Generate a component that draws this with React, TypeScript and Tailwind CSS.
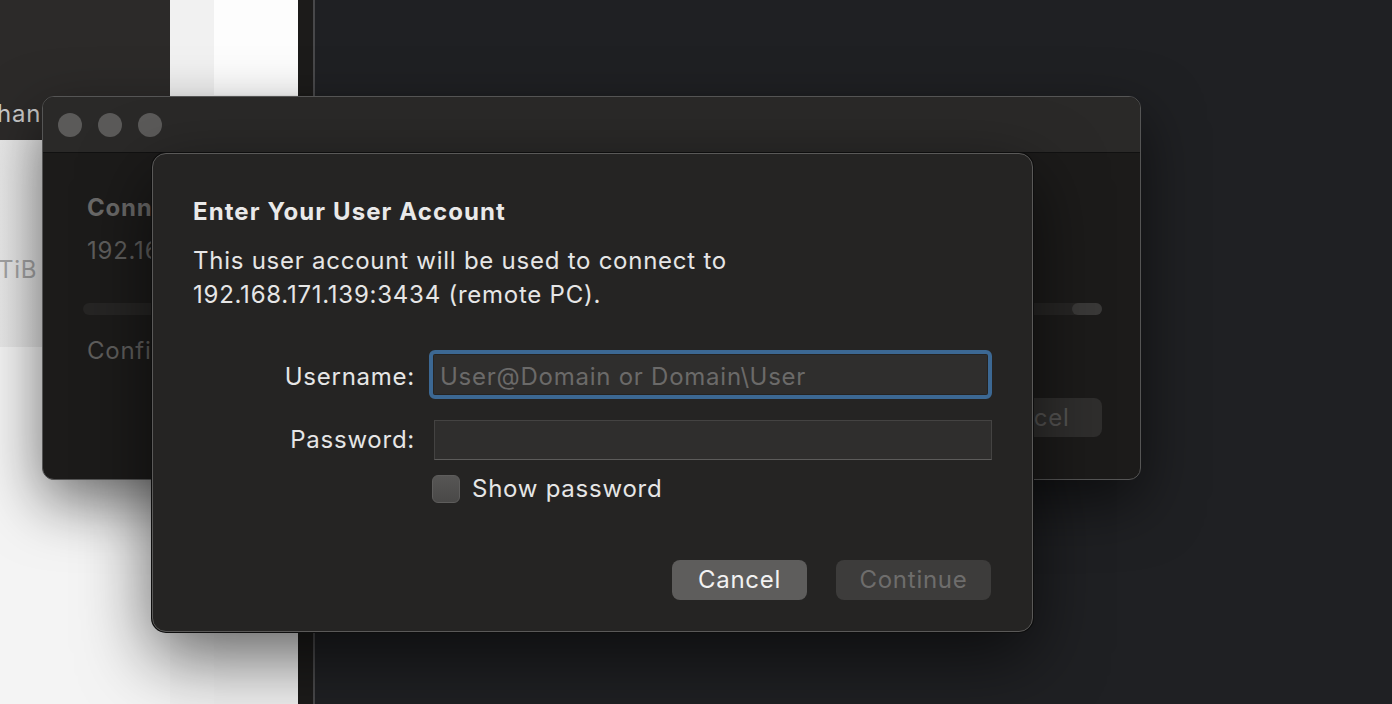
import React from 'react';

const font = { fontFamily: 'Inter, "Noto Sans", sans-serif' };

function Desktop() {
  return (
    <div className="absolute inset-0 flex">
      <div className="flex w-[298px]">
        <div className="flex w-[170px] flex-col">
          <div className="flex h-[140px] items-end bg-[#2c2a29] pb-[14px]">
            <span className="-ml-[3px] text-[24px] leading-none text-[#c9c9c9]">han</span>
          </div>
          <div className="flex h-[207px] items-start bg-gradient-to-r from-[#e8e8e8] to-[#d6d6d6] pt-[118px]">
            <span className="-ml-[2px] text-[24px] leading-none text-[#a3a3a3]">TiB</span>
          </div>
          <div className="flex-1 bg-[#f4f4f4]" />
        </div>
        <div className="w-[44px] bg-[#f1f1f1]" />
        <div className="flex flex-1 flex-col">
          <div className="h-[95px] bg-[#fdfdfd]" />
          <div className="flex-1 bg-[#efefef]" />
        </div>
      </div>
      <div className="w-[15px] bg-[#1c1b1a]" />
      <div className="w-[2px] bg-[#48484a]" />
      <div className="flex-1 bg-[#1f2023]" />
    </div>
  );
}

function BackWindow() {
  return (
    <div className="absolute left-[42px] top-[96px] flex h-[384px] w-[1099px] flex-col overflow-hidden rounded-[12px] border border-[#555] bg-[#1c1b1a] shadow-[0_22px_60px_rgba(0,0,0,0.55)]">
      <div className="flex h-[56px] items-center gap-[16px] border-b border-[#111] bg-[#2a2928] pl-[15px]">
        <div className="h-[24px] w-[24px] rounded-full bg-[#5b5a59]" />
        <div className="h-[24px] w-[24px] rounded-full bg-[#5b5a59]" />
        <div className="h-[24px] w-[24px] rounded-full bg-[#5b5a59]" />
      </div>
      <div className="flex flex-1 flex-col pl-[40px] pr-[38px] pt-[43px]">
        <div className="pl-[4px] text-[24px] font-bold leading-none text-[#6a6968]">Connecting</div>
        <div className="mt-[19px] pl-[4px] text-[24px] leading-none text-[#5f5e5d]">192.168.171.139</div>
        <div className="mt-[40px] flex h-[12px] justify-end rounded-full bg-[#262524]">
          <div className="w-[30px] rounded-full bg-[#3a3938]" />
        </div>
        <div className="mt-[24px] pl-[4px] text-[24px] leading-none text-[#5f5e5d]">Configuring</div>
        <div className="mt-[35px] flex justify-end">
          <div className="flex h-[39px] w-[148px] items-center justify-center rounded-[8px] bg-[#2f2e2d] text-[24px] text-[#555453]">
            Cancel
          </div>
        </div>
      </div>
    </div>
  );
}

function Dialog() {
  return (
    <div className="absolute left-[152px] top-[153px] flex h-[479px] w-[881px] flex-col rounded-[14px] border border-[#5a5958] bg-[#252423] pl-[40px] pr-[40px] pt-[44px] shadow-[0_0_0_1px_#0e0e0e,0_24px_70px_rgba(0,0,0,0.6)]">
      <div className="text-[24px] font-bold leading-[28px] tracking-[1.1px] text-[#e9e9e9]">Enter Your User Account</div>
      <div className="mt-[18px] text-[24px] leading-[34px] text-[#e6e6e6]">
        This user account will be used to connect to
        <br />
        192.168.171.139:3434 (remote PC).
      </div>
      <div className="mt-[38px] flex items-center">
        <div className="w-[222px] pt-[5px] text-right text-[24px] text-[#e6e6e6]">Username:</div>
        <div className="ml-[14px] flex-1 rounded-[6px] border-[4px] border-[#3c6893] p-[1px]">
          <div className="flex h-[39px] items-center bg-[#2f2e2d] px-[6px] pt-[4px] text-[24px] text-[#6b6a69]">
            User@Domain or Domain\User
          </div>
        </div>
      </div>
      <div className="mt-[21px] flex items-center">
        <div className="w-[222px] text-right text-[24px] text-[#e6e6e6]">Password:</div>
        <div className="ml-[19px] h-[40px] flex-1 border border-[#444342] border-b-[#5c5b5a] bg-[#2f2e2d]" />
      </div>
      <div className="mt-[15px] flex items-center gap-[12px] pl-[239px]">
        <div className="h-[28px] w-[28px] rounded-[6px] border border-[#5e5d5c] bg-gradient-to-b from-[#575655] to-[#4a4948]" />
        <span className="text-[24px] leading-[28px] text-[#e6e6e6]">Show password</span>
      </div>
      <div className="mt-[57px] flex justify-end gap-[29px] pr-[1px]">
        <div className="flex h-[40px] w-[135px] items-center justify-center rounded-[8px] bg-[#5e5d5c] text-[24px] text-[#f2f2f2]">
          Cancel
        </div>
        <div className="flex h-[40px] w-[155px] items-center justify-center rounded-[8px] bg-[#3d3c3b] text-[24px] text-[#6e6d6c]">
          Continue
        </div>
      </div>
    </div>
  );
}

export default function App() {
  return (
    <div className="relative h-[704px] w-[1392px] overflow-hidden tracking-[0.75px]" style={font}>
      <Desktop />
      <BackWindow />
      <Dialog />
    </div>
  );
}
